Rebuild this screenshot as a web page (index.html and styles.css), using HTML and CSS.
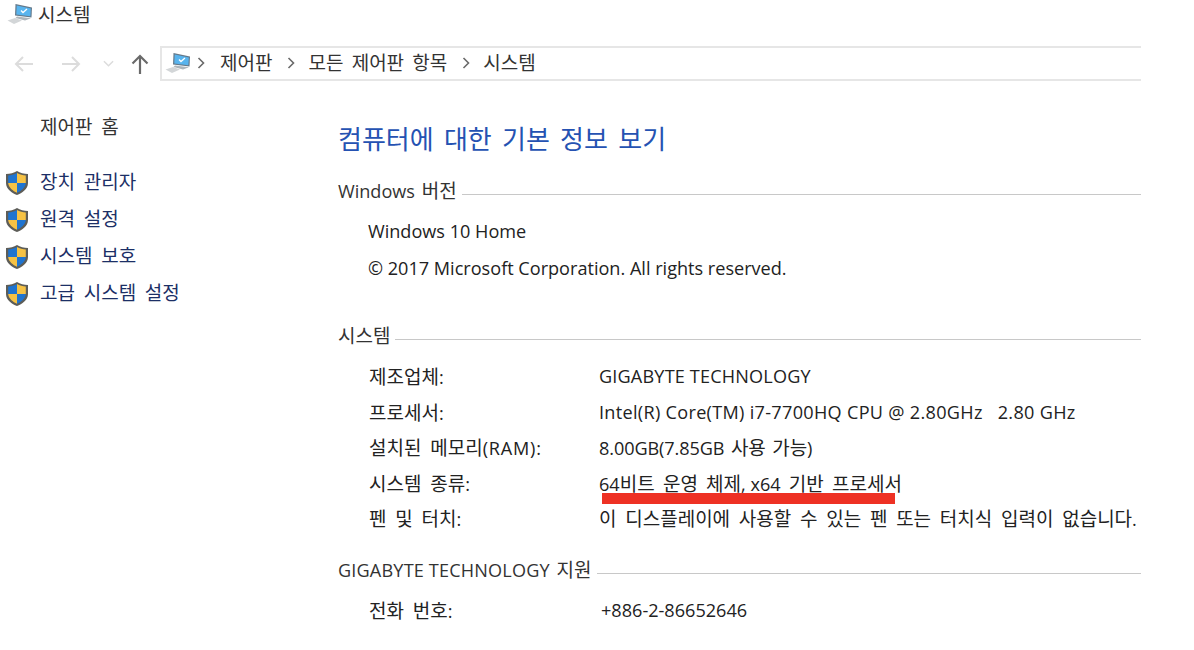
FILE: index.html
```html
<!DOCTYPE html>
<html lang="ko">
<head>
<meta charset="utf-8">
<title>시스템</title>
<link rel="stylesheet" href="styles.css">
</head>
<body>
<svg class="defs" width="0" height="0" aria-hidden="true">
  <symbol id="pc" viewBox="0 0 26 22">
    <path d="M0.500 17.500 L8 15 L15 17.500 L7 21 Z" fill="#d3d6d8"/>
    <path d="M8.500 1 L25 4.500 L24.500 14.500 L8 12.500 Z" fill="#65798a"/>
    <path d="M9.700 2.400 L23.800 5.500 L23.400 13.300 L9.300 11.600 Z" fill="#58b4ee"/>
    <path d="M14 7.500 L16 9.500 L20 6" fill="none" stroke="#fff" stroke-width="1.300"/>
    <path d="M10 13.500 L24 15.300 L18 17.500 L8.500 15 Z" fill="#aeb6bc"/>
  </symbol>
  <symbol id="shield" viewBox="0 0 24 26">
    <path d="M12 1 C9 3 5 4 1 4 L1 13 C1 19 7 23 12 25 C17 23 23 19 23 13 L23 4 C19 4 15 3 12 1 Z" fill="#5d5d58"/>
    <path d="M12 3 C9.500 4.500 6 5.500 3.200 5.600 L3.200 13 L12 13 Z" fill="#1f74d0"/>
    <path d="M12 3 C14.500 4.500 18 5.500 20.800 5.600 L20.800 13 L12 13 Z" fill="#f6c244"/>
    <path d="M3.200 13 C3.500 17.500 8 21 12 22.800 L12 13 Z" fill="#f6c244"/>
    <path d="M20.800 13 C20.500 17.500 16 21 12 22.800 L12 13 Z" fill="#1f74d0"/>
  </symbol>
</svg>
<header class="titlebar">
  <svg class="pc-icon"><use href="#pc"/></svg>
  <span>시스템</span>
</header>
<nav class="navbar">
  <div class="nav-buttons">
    <svg class="nav-back" viewBox="0 0 20 18"><path d="M19 9H2M9 2L2 9l7 7" fill="none" stroke="#dcdcdc" stroke-width="2"/></svg>
    <svg class="nav-forward" viewBox="0 0 20 18"><path d="M1 9h17M11 2l7 7-7 7" fill="none" stroke="#dcdcdc" stroke-width="2"/></svg>
    <svg class="nav-down" viewBox="0 0 12 8"><path d="M1 1l5 5 5-5" fill="none" stroke="#dcdcdc" stroke-width="1.600"/></svg>
    <svg class="nav-up" viewBox="0 0 18 20"><path d="M9 20V2M1.500 9.500L9 2l7.500 7.500" fill="none" stroke="#6a6a6a" stroke-width="2.200"/></svg>
  </div>
  <div class="address">
    <svg class="pc-icon"><use href="#pc"/></svg>
    <svg class="chev" viewBox="0 0 8 12"><path d="M1.500 1l5 5-5 5" fill="none" stroke="#6a6a6a" stroke-width="1.600"/></svg>
    <span>제어판</span>
    <svg class="chev" viewBox="0 0 8 12"><path d="M1.500 1l5 5-5 5" fill="none" stroke="#6a6a6a" stroke-width="1.600"/></svg>
    <span>모든 제어판 항목</span>
    <svg class="chev" viewBox="0 0 8 12"><path d="M1.500 1l5 5-5 5" fill="none" stroke="#6a6a6a" stroke-width="1.600"/></svg>
    <span>시스템</span>
  </div>
</nav>
<div class="content">
  <aside class="sidebar">
    <a class="home">제어판 홈</a>
    <ul class="links">
      <li><svg class="shield"><use href="#shield"/></svg><a>장치 관리자</a></li>
      <li><svg class="shield"><use href="#shield"/></svg><a>원격 설정</a></li>
      <li><svg class="shield"><use href="#shield"/></svg><a>시스템 보호</a></li>
      <li><svg class="shield"><use href="#shield"/></svg><a>고급 시스템 설정</a></li>
    </ul>
  </aside>
  <main class="main">
    <h1>컴퓨터에 대한 기본 정보 보기</h1>
    <section class="group group-windows">
      <h2><span><span class="en">Windows</span> 버전</span></h2>
      <p class="plain en">Windows 10 Home</p>
      <p class="plain en">© 2017 Microsoft Corporation. All rights reserved.</p>
    </section>
    <section class="group group-system">
      <h2><span>시스템</span></h2>
      <dl>
        <div><dt>제조업체<span class="en">:</span></dt><dd class="en caps">GIGABYTE TECHNOLOGY</dd></div>
        <div><dt>프로세서<span class="en">:</span></dt><dd class="en spec">Intel(R) Core(TM) i7-7700HQ CPU @ 2.80GHz &nbsp; 2.80 GHz</dd></div>
        <div><dt>설치된 메모리<span class="en ram">(RAM):</span></dt><dd class="tight"><span class="en">8.00GB(7.85GB</span> 사용 가능<span class="en">)</span></dd></div>
        <div><dt>시스템 종류<span class="en">:</span></dt><dd class="marked"><span class="en">64</span>비트 운영 체제<span class="en">, x64</span> 기반 프로세서<i class="redline"></i></dd></div>
        <div><dt>펜 및 터치<span class="en">:</span></dt><dd>이 디스플레이에 사용할 수 있는 펜 또는 터치식 입력이 없습니다<span class="en">.</span></dd></div>
      </dl>
    </section>
    <section class="group group-support">
      <h2><span><span class="en caps">GIGABYTE TECHNOLOGY</span> 지원</span></h2>
      <dl>
        <div><dt>전화 번호<span class="en">:</span></dt><dd class="en phone">+886-2-86652646</dd></div>
      </dl>
    </section>
  </main>
</div>
</body>
</html>
```
FILE: styles.css
```css
* { box-sizing: border-box; margin: 0; padding: 0; }
html, body { height: 100%; }
body {
  background: #fff;
  color: #222;
  font-family: "Open Sans", "Noto Sans CJK KR", sans-serif;
  font-size: 19px;
  word-spacing: 3.800px;
  overflow: hidden;
}
.en { font-size: 18.100px; word-spacing: 0; }
.caps { letter-spacing: 0.170px; }
.spec { letter-spacing: 0.300px; }
.ram { letter-spacing: 0.800px; }
.tight { word-spacing: 1.800px; letter-spacing: -0.100px; }
.phone { margin-left: 2px; }
.defs { position: absolute; }
.titlebar {
  height: 28px;
  display: flex;
  align-items: center;
  gap: 5px;
  padding-left: 7px;
  color: #333;
}
.pc-icon { width: 26px; height: 22px; flex: none; }
.navbar {
  height: 35px;
  margin-top: 18px;
  display: flex;
  align-items: center;
  padding-right: 53px;
}
.nav-buttons { width: 160px; display: flex; align-items: center; padding-left: 14px; flex: none; }
.nav-back { width: 20px; height: 18px; }
.nav-forward { width: 20px; height: 18px; margin-left: 27px; }
.nav-down { width: 11px; height: 8px; margin-left: 22px; }
.nav-up { width: 18px; height: 20px; margin-left: 17px; }
.address {
  flex: 1;
  height: 35px;
  border: 2px solid #e6e6e6;
  border-right: 0;
  display: flex;
  align-items: center;
  padding: 0 0 2px 3px;
  color: #333;
  line-height: 28px;
  word-spacing: 3.300px;
}
.chev { width: 8px; height: 12px; margin: 0 13px 0 15px; flex: none; }
.address .pc-icon + .chev { margin-left: 6px; margin-right: 15px; }
.content { display: flex; }
.sidebar { width: 338px; flex: none; padding-top: 28px; }
.home, .links a { color: #1c2f66; line-height: 37px; }
.home { display: block; padding-left: 40px; color: #333; }
.links { list-style: none; margin-top: 18px; }
.links li { display: flex; align-items: center; height: 37px; padding-left: 5px; }
.shield { width: 24px; height: 26px; margin-right: 11px; flex: none; }
.main { flex: 1; padding-right: 53px; padding-top: 41px; }
h1 {
  font-size: 26px;
  font-weight: 400;
  color: #2552b2;
  line-height: 34px;
  word-spacing: 3.500px;
}
h2 {
  font-size: 19px;
  font-weight: 400;
  color: #333;
  display: flex;
  align-items: center;
  line-height: 24px;
  word-spacing: 1.800px;
}
h2::after { content: ""; flex: 1; height: 1px; background: #c8c8c8; margin-left: 5px; margin-top: 7px; }
.group-windows { margin-top: 23px; }
.group-system { margin-top: 37px; }
.group-support { margin-top: 22px; }
.plain { margin-left: 30px; line-height: 37px; }
.group-windows h2 { margin-bottom: 10px; }
.group-system h2 { margin-bottom: 10.500px; }
.group-support h2 { margin-bottom: 10px; }
dl > div { display: flex; height: 35.500px; align-items: center; margin-left: 31px; }
dt { width: 230px; flex: none; }
dd { white-space: nowrap; }
.marked { position: relative; word-spacing: 3.300px; }
.redline { position: absolute; left: 3px; right: 7px; top: 24px; height: 11px; background: #ee3124; }
```
